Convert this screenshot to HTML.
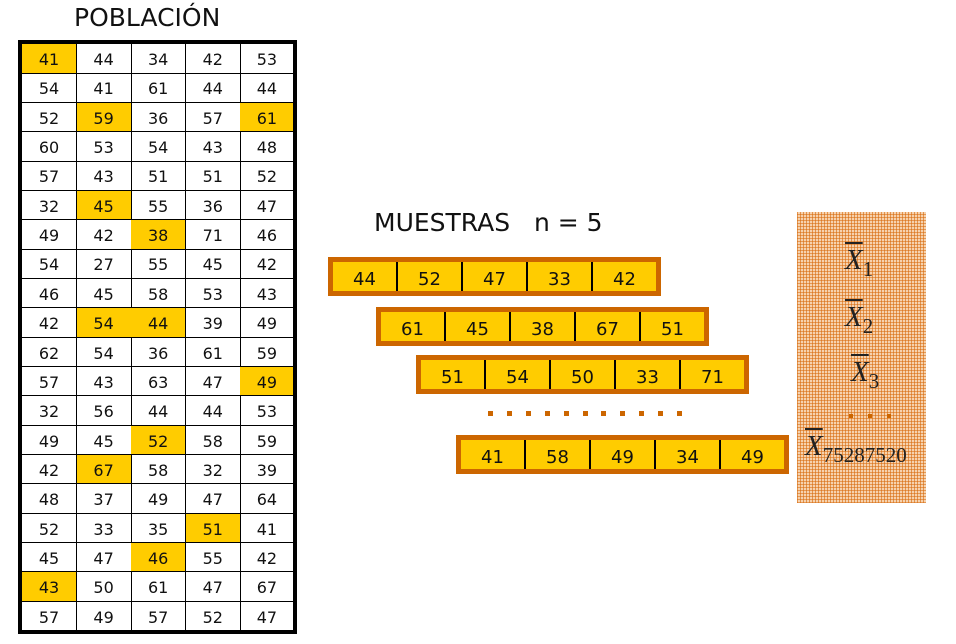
<!DOCTYPE html>
<html><head><meta charset="utf-8"><style>
body{margin:0;width:956px;height:644px;background:#fff;position:relative;overflow:hidden;font-family:"DejaVu Sans","Liberation Sans",sans-serif;}
.t{position:absolute;left:18px;top:40px;width:271px;height:586px;border:4px solid #000;background:#fff;}
.c{position:absolute;width:54px;height:28.3px;border-right:1px solid #000;border-bottom:1px solid #000;font-size:16px;text-align:center;line-height:31px;color:#111;box-sizing:border-box}
.y{background:#FFCC00}
.b{position:absolute;height:39px;width:333px;border:5px solid #CC6600;box-sizing:border-box;background:#FFCC00;display:flex}
.b div{flex:1;border-right:2px solid #000;text-align:center;font-size:18px;line-height:35px;color:#111}
.b div:last-child{border-right:none}
.d{position:absolute;width:5px;height:5px;background:#CC6600;top:411px}
.p{position:absolute;left:797px;top:212px;width:129px;height:291px;background-color:#F6D2AE;
background-image:repeating-linear-gradient(90deg,rgba(215,105,10,.6) 0 1px,transparent 1px 3px),repeating-linear-gradient(0deg,rgba(215,105,10,.55) 0 1px,transparent 1px 3px);}
.x{position:absolute;font-family:"Liberation Serif",serif;font-style:italic;font-size:29px;color:#222}
.x span{text-decoration:overline;}
.x sub{font-style:normal;font-size:21px;vertical-align:-7px}
</style></head><body>
<div style="position:absolute;left:74px;top:3px;font-size:25px;color:#111">POBLACIÓN</div>
<div class="t" id="t"></div>
<div style="position:absolute;left:374px;top:208px;font-size:25px;color:#111">MUESTRAS&nbsp;&nbsp;&nbsp;n = 5</div>
<div class="b" style="left:328px;top:257px"><div>44</div><div>52</div><div>47</div><div>33</div><div>42</div></div>
<div class="b" style="left:376px;top:307px"><div>61</div><div>45</div><div>38</div><div>67</div><div>51</div></div>
<div class="b" style="left:416px;top:355px"><div>51</div><div>54</div><div>50</div><div>33</div><div>71</div></div>
<div class="b" style="left:456px;top:435px"><div>41</div><div>58</div><div>49</div><div>34</div><div>49</div></div>
<div id="dots"></div>
<div class="p"></div>
<div class="x" style="left:845px;top:244px"><span>X</span><sub>1</sub></div>
<div class="x" style="left:845px;top:301px"><span>X</span><sub>2</sub></div>
<div class="x" style="left:851px;top:356px"><span>X</span><sub>3</sub></div>
<div style="position:absolute;left:849px;top:414px;width:44px;height:4px;background:repeating-linear-gradient(90deg,#CC6600 0 4px,transparent 4px 19px)"></div>
<div class="x" style="left:805px;top:430px"><span>X</span><sub>75287520</sub></div>
<script>
var d=[[41,44,34,42,53],[54,41,61,44,44],[52,59,36,57,61],[60,53,54,43,48],[57,43,51,51,52],[32,45,55,36,47],[49,42,38,71,46],[54,27,55,45,42],[46,45,58,53,43],[42,54,44,39,49],[62,54,36,61,59],[57,43,63,47,49],[32,56,44,44,53],[49,45,52,58,59],[42,67,58,32,39],[48,37,49,47,64],[52,33,35,51,41],[45,47,46,55,42],[43,50,61,47,67],[57,49,57,52,47]];
var h={"0,0":1,"2,1":1,"2,4":1,"5,1":1,"6,2":1,"9,1":1,"9,2":1,"11,4":1,"13,2":1,"14,1":1,"16,3":1,"17,2":1,"18,0":1};
var s="";for(var r=0;r<20;r++)for(var c=0;c<5;c++){s+='<div class="c'+(h[r+","+c]?' y':'')+'" style="left:'+(c*54.6)+'px;top:'+(r*29.35)+'px;width:'+(c==4?53:55)+'px;height:'+(r==19?28:29.5)+'px;'+(c==4?'border-right:none;':'')+(r==19?'border-bottom:none;':'')+'">'+d[r][c]+'</div>';}
document.getElementById("t").innerHTML=s;
var q="";for(var i=0;i<11;i++)q+='<div class="d" style="left:'+(488+i*18.9)+'px"></div>';document.getElementById("dots").innerHTML=q;
</script>
</body></html>
